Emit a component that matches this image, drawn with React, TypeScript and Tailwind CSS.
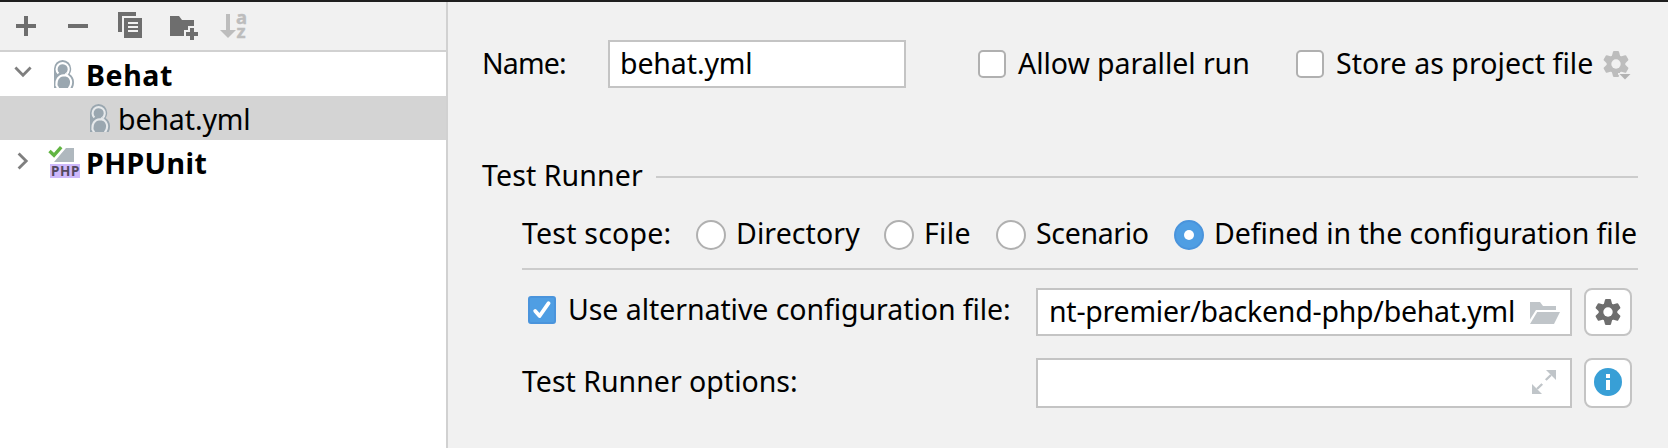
import React from "react";

function Label({ className, children }: { className: string; children: React.ReactNode }) {
  return <div className={"h-10 shrink-0 whitespace-nowrap leading-10 " + className}>{children}</div>;
}

function Gear({ color, hole, size = 26 }: { color: string; hole: string; size?: number }) {
  return (
    <svg width={size} height={size} viewBox="-13 -13 26 26" className="shrink-0">
      <circle r="9.3" fill={color} />
      {[0, 60, 120, 180, 240, 300].map((a) => (
        <path key={a} d="M-4.4 -7 L-3 -12.2 Q-2.8 -13 -2 -13 H2 Q2.8 -13 3 -12.2 L4.4 -7 Z" fill={color} transform={`rotate(${a})`} />
      ))}
      <circle r="4.7" fill={hole} />
    </svg>
  );
}

function BehatIcon({ bg }: { bg: string }) {
  return (
    <svg width="20" height="28" viewBox="0 0 20 28" className="shrink-0">
      <path d="M0 28 V8.8 A8.6 8.8 0 0 1 17.2 8.8 C17.2 11.2 16.6 12.8 15.6 14 C18.4 15.8 20 18.6 20 22 C20 24.5 19.5 26.5 18.6 28 Z" fill="#9aa7b0" />
      <path d="M4.4 13.6 A6.1 6.1 0 1 1 12.6 13.9" fill="none" stroke={bg} strokeWidth="2.1" />
      <path d="M2.6 26 C1.8 20 4.5 15.4 9.8 15.2 C17.6 15.4 18.9 23.5 14.8 28.5" fill="none" stroke={bg} strokeWidth="2.1" />
      <path d="M11.4 13 L14.6 15 L14 16.8 L10 15.4 Z" fill={bg} />
      <path d="M1.6 25.6 H3.8 L5.2 28 H2.6 Z" fill={bg} />
    </svg>
  );
}

function Radio({ on = false }: { on?: boolean }) {
  return on ? (
    <div className="flex size-[30px] shrink-0 items-center justify-center rounded-full border-2 border-[#4a94dc] bg-[#4f9ee3]">
      <div className="size-[10px] rounded-full bg-white" />
    </div>
  ) : (
    <div className="size-[30px] shrink-0 rounded-full border-2 border-[#b0b0b0] bg-white" />
  );
}

function Checkbox() {
  return <div className="size-7 shrink-0 rounded-[5px] border-2 border-[#b0b0b0] bg-white" />;
}

function Toolbar() {
  return (
    <div className="flex h-[50px] shrink-0 items-start border-b-2 border-[#d1d1d1] pl-4 pt-[10px]">
      <svg width="20" height="28" viewBox="0 0 20 28" fill="#6e6e6e">
        <path d="M8 4h4v8h8v4h-8v8H8v-8H0v-4h8z" />
      </svg>
      <svg width="20" height="28" viewBox="0 0 20 28" fill="#6e6e6e" className="ml-8">
        <path d="M0 12h20v4H0z" />
      </svg>
      <svg width="24" height="28" viewBox="0 0 24 28" fill="#6e6e6e" className="ml-[30px]">
        <path d="M0 0h18v4H4v16H0z" />
        <path fillRule="evenodd" d="M6 6h18v20H6zM10 10v2h10v-2zM10 14v2h10v-2zM10 18v2h10v-2z" />
      </svg>
      <svg width="28" height="28" viewBox="0 0 28 28" fill="#6e6e6e" className="ml-7">
        <path d="M0 4h9l3 4h12v6h-6v4h-4v6H0z" />
        <path d="M20 16h4v4h4v4h-4v4h-4v-4h-4v-4h4z" />
      </svg>
      <svg width="28" height="28" viewBox="0 0 28 28" fill="#bdbdbd" className="ml-[22px] overflow-visible">
        <path d="M6 2h4v16h6l-8 8-8-8h6z" />
        <g stroke="#bdbdbd" strokeWidth="0.4" fontSize="18.5" fontWeight="700" fontFamily="Noto Sans">
          <text x="16" y="12.4">a</text>
          <text x="16.6" y="26">z</text>
        </g>
      </svg>
    </div>
  );
}

export default function App() {
  return (
    <div className="flex h-[448px] w-[1668px] flex-col overflow-hidden border-t-2 border-[#1f1f1f] bg-[#f1f1f1] font-['Noto_Sans',sans-serif] text-[28.5px] text-black">
      <div className="flex min-h-0 flex-1">
        <div className="flex w-[448px] shrink-0 flex-col border-r-2 border-[#d1d1d1]">
          <Toolbar />
          <div className="flex-1 bg-white">
            <div className="flex h-11 items-center pl-[14px]">
              <svg width="18" height="12" viewBox="0 0 18 12" fill="none" stroke="#7f7f7f" strokeWidth="2.8" className="-mt-[5px]">
                <path d="M1.4 1.6 9 9.2l7.6-7.6" />
              </svg>
              <div className="ml-[22px]"><BehatIcon bg="#ffffff" /></div>
              <Label className="ml-3 mt-0.5 font-bold tracking-[0.6px]">Behat</Label>
            </div>
            <div className="flex h-11 items-center bg-[#d4d4d4] pl-[90px]">
              <BehatIcon bg="#e6e9eb" />
              <Label className="ml-2 mt-0.5 tracking-[-0.12px]">behat.yml</Label>
            </div>
            <div className="flex h-11 items-center pl-[17px]">
              <svg width="12" height="18" viewBox="0 0 12 18" fill="none" stroke="#7f7f7f" strokeWidth="2.8" className="-mt-0.5">
                <path d="M1.6 1.4 9.2 9l-7.6 7.6" />
              </svg>
              <svg width="32" height="32" viewBox="0 0 32 32" className="ml-[19px]">
                <path d="M18 2h8v14H6z" fill="#afb8be" />
                <path d="M1 5.5 6 10 13.5 1" fill="none" stroke="#fff" strokeWidth="7" />
                <path d="M1.5 5 6 9.3 13.2 1.2" fill="none" stroke="#62b543" strokeWidth="3.4" />
                <path d="M2 18h30v14H2z" fill="#ceb9fb" />
                <text x="3" y="30" fontSize="13.5" fontWeight="700" fontFamily="Noto Sans" fill="#54495f" textLength="28.5">PHP</text>
              </svg>
              <Label className="ml-[6px] mt-0.5 font-bold tracking-[0.45px]">PHPUnit</Label>
            </div>
          </div>
        </div>

        <div className="flex min-w-0 flex-1 flex-col pt-[38px]">
          <div className="flex h-12 items-center pl-[34px]">
            <Label className="-mt-0.5 w-[126px] tracking-[-0.85px]">Name:</Label>
            <div className="flex h-12 w-[298px] items-center border-2 border-[#c4c4c4] bg-white pl-[10px]">
              <Label className="-mt-0.5 tracking-[-0.12px]">behat.yml</Label>
            </div>
            <div className="ml-[72px]"><Checkbox /></div>
            <Label className="-mt-0.5 ml-3 w-[278px] tracking-[-0.05px]">Allow parallel run</Label>
            <Checkbox />
            <Label className="-mt-0.5 ml-3 w-[268px] tracking-[0.05px]">Store as project file</Label>
            <div className="relative -ml-px">
              <Gear color="#bdbdbd" hole="#f1f1f1" />
              <svg width="14" height="8" viewBox="0 0 14 8" className="absolute left-[15px] top-[22px]">
                <path d="M0 0h14L7 7z" fill="#f1f1f1" stroke="#f1f1f1" strokeWidth="2" />
                <path d="M1.5 1h11L7 6.5z" fill="#b3b3b3" />
              </svg>
            </div>
          </div>

          <div className="mt-[69px] flex h-10 items-center pl-[34px]">
            <Label className="-mt-1 w-[174px] tracking-[0.1px]">Test Runner</Label>
            <div className="h-0.5 w-[982px] bg-[#cccccc]" />
          </div>

          <div className="mt-[18px] flex h-10 items-center pl-[74px]">
            <Label className="-mt-1 w-[174px] tracking-[0.2px]">Test scope:</Label>
            <Radio />
            <Label className="-mt-1 ml-[10px] w-[148px] tracking-[0.1px]">Directory</Label>
            <Radio />
            <Label className="-mt-1 ml-[10px] w-[72px] tracking-[0.3px]">File</Label>
            <Radio />
            <Label className="-mt-1 ml-[10px] w-[138px] tracking-[-0.33px]">Scenario</Label>
            <Radio on />
            <Label className="-mt-1 ml-[10px] tracking-[-0.06px]">Defined in the configuration file</Label>
          </div>

          <div className="ml-[74px] mt-[13px] h-0.5 w-[1116px] shrink-0 bg-[#cccccc]" />

          <div className="mt-[18px] flex h-12 items-center pl-20">
            <div className="-mt-1 size-7 rounded-[3px] border-2 border-[#4a94dc] bg-[#4f9ee3]">
              <svg width="24" height="24" viewBox="0 0 24 24" fill="none" stroke="#fff" strokeWidth="3.8" strokeLinecap="round" strokeLinejoin="round">
                <path d="M5.2 13 9.6 18 18.6 5.2" />
              </svg>
            </div>
            <Label className="-mt-1.5 ml-3 w-[468px] tracking-[-0.06px]">Use alternative configuration file:</Label>
            <div className="flex h-12 w-[536px] items-center border-2 border-[#c4c4c4] bg-white pl-[11px]">
              <Label className="-mt-[3px] w-[481px] tracking-[-0.25px]">nt-premier/backend-php/behat.yml</Label>
              <svg width="30" height="22" viewBox="0 0 30 22" fill="#c0c5c9" className="mt-0.5">
                <path d="M0 0h10l3 4h13v4H6L0 17.5z" />
                <path d="M7.2 10H30l-6 12H0z" />
              </svg>
            </div>
            <div className="ml-3 flex size-12 items-center justify-center rounded-lg border-2 border-[#c4c4c4] bg-white">
              <Gear color="#6e6e6e" hole="#ffffff" />
            </div>
          </div>

          <div className="mt-[22px] flex h-[50px] items-center pl-[74px]">
            <Label className="-mt-1 w-[514px]">Test Runner options:</Label>
            <div className="flex h-[50px] w-[536px] items-center justify-end border-2 border-[#c4c4c4] bg-white pr-[14px]">
              <svg width="24" height="24" viewBox="0 0 24 24" fill="#c0c5c9" className="-mt-0.5">
                <path d="M14 0h10v10z" />
                <path d="M0 14v10h10z" />
                <path d="M13.8 10 19 5M10.2 14 5 19" stroke="#c0c5c9" strokeWidth="2.4" />
              </svg>
            </div>
            <div className="ml-3 flex h-[50px] w-12 items-center justify-center rounded-lg border-2 border-[#c4c4c4] bg-white">
              <svg width="28" height="28" viewBox="0 0 28 28" className="-mt-0.5">
                <circle cx="14" cy="14" r="14" fill="#389fd6" />
                <path d="M12 6h4v4h-4zM12 12h4v10h-4z" fill="#fff" />
              </svg>
            </div>
          </div>
        </div>
      </div>
    </div>
  );
}
